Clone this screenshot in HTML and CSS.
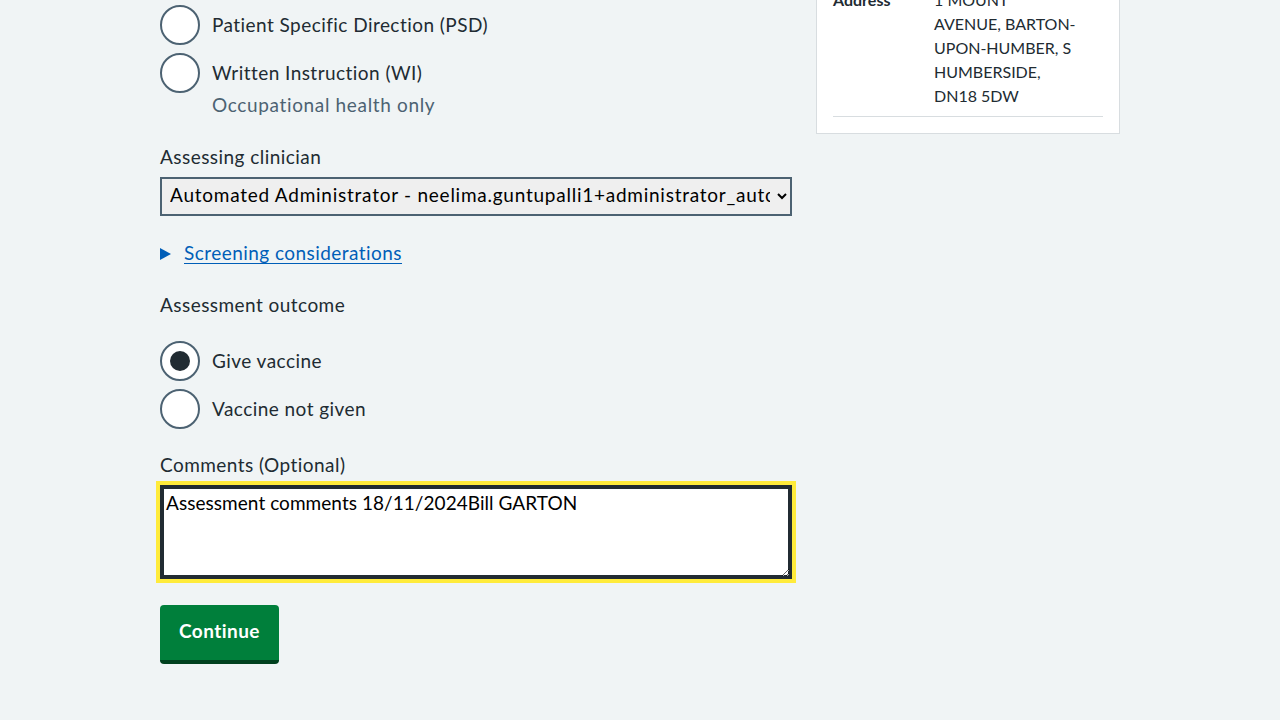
FILE: index.html
```html
<!DOCTYPE html>
<html lang="en">
<head>
    <meta charset="UTF-8">
    <meta name="viewport" content="width=device-width, initial-scale=1.0">
    <title>Assessment</title>
    <link rel="stylesheet" href="styles.css">
</head>
<body>

<div class="page">
    <div class="main-col">
        <div class="radio-group">
            <div class="radio-item">
                <span class="radio"></span>
                <div class="radio-text">Patient Specific Direction (PSD)</div>
            </div>
            <div class="radio-item">
                <span class="radio"></span>
                <div class="radio-text">
                    Written Instruction (WI)
                    <div class="hint">Occupational health only</div>
                </div>
            </div>
        </div>

        <div class="form-group">
            <label class="label" for="clinician">Assessing clinician</label>
            <select id="clinician" class="select">
                <option>Automated Administrator - neelima.guntupalli1+administrator_automated@nhs.net</option>
            </select>
        </div>

        <div class="details">
            <span class="details-arrow"></span>
            <a href="#" class="details-link">Screening considerations</a>
        </div>

        <div class="form-group">
            <div class="legend">Assessment outcome</div>
            <div class="radio-item">
                <span class="radio checked"></span>
                <div class="radio-text">Give vaccine</div>
            </div>
            <div class="radio-item">
                <span class="radio"></span>
                <div class="radio-text">Vaccine not given</div>
            </div>
        </div>

        <div class="form-group">
            <label class="label" for="comments">Comments (Optional)</label>
            <textarea id="comments" class="textarea">Assessment comments 18/11/2024Bill GARTON</textarea>
        </div>

        <button class="button">Continue</button>
    </div>

    <div class="side-col">
        <div class="card">
            <div class="summary-row">
                <div class="summary-key">Address</div>
                <div class="summary-value">1 MOUNT<br>AVENUE, BARTON-<br>UPON-HUMBER, S<br>HUMBERSIDE,<br>DN18 5DW</div>
            </div>
        </div>
    </div>
</div>

</body>
</html>
```

FILE: styles.css
```css
body {
    font-family: 'Lato', 'Liberation Sans', sans-serif;
    background-color: #f0f4f5;
    color: #212b32;
    margin: 0;
    padding: 0;
}

.page {
    width: 960px;
    margin: 0 auto;
    display: grid;
    grid-template-columns: 632px 304px;
    gap: 24px;
    align-items: start;
}

.main-col {
    padding-top: 5px;
    font-size: 19px;
    line-height: 28px;
    letter-spacing: 0.45px;
}

.radio-item {
    display: flex;
    align-items: flex-start;
    margin-bottom: 8px;
}

.radio-item:last-child {
    margin-bottom: 0;
}

.radio {
    flex: none;
    width: 40px;
    height: 40px;
    box-sizing: border-box;
    border: 2px solid #4c6272;
    border-radius: 50%;
    background-color: #fff;
    position: relative;
}

.radio.checked::after {
    content: '';
    position: absolute;
    top: 8px;
    left: 8px;
    width: 20px;
    height: 20px;
    border-radius: 50%;
    background-color: #212b32;
}

.radio-text {
    margin-left: 12px;
    padding-top: 6px;
}

.hint {
    color: #4c6272;
    margin-top: 4px;
    letter-spacing: 0.65px;
}

.radio-group {
    margin-bottom: 24px;
}

.form-group {
    margin-bottom: 22px;
}

.label,
.legend {
    display: block;
    margin-bottom: 6px;
}

.legend {
    margin-bottom: 22px;
}

.select {
    display: block;
    width: 632px;
    height: 39px;
    box-sizing: border-box;
    border: 2px solid #4c6272;
    border-radius: 0;
    background-color: #efefef;
    color: #000;
    font-family: inherit;
    font-size: 19px;
    letter-spacing: 0.75px;
    padding: 0 4px 4px;
}

.details {
    display: flex;
    align-items: center;
    margin-top: 23px;
    margin-bottom: 24px;
}

.details-arrow {
    width: 0;
    height: 0;
    border-top: 6px solid transparent;
    border-bottom: 6px solid transparent;
    border-left: 11px solid #005eb8;
    margin-right: 13px;
    margin-top: 2px;
}

.details-link {
    color: #005eb8;
    text-decoration: underline;
    text-underline-offset: 3px;
}

.textarea {
    display: block;
    width: 632px;
    height: 94px;
    box-sizing: border-box;
    margin-top: 1px;
    border: 2px solid #212b32;
    box-shadow: inset 0 0 0 2px #212b32;
    outline: 4px solid #ffeb3b;
    padding: 4px 4px 4px;
    font-family: inherit;
    font-size: 19px;
    letter-spacing: 0.05px;
    line-height: 24px;
    color: #000;
    resize: vertical;
    margin-bottom: 26px;
}

.button {
    font-family: inherit;
    font-size: 19px;
    font-weight: bold;
    letter-spacing: 0.45px;
    line-height: 28px;
    color: #fff;
    background-color: #007f3b;
    border: none;
    border-bottom: 4px solid #00401e;
    border-radius: 4px;
    padding: 12px 19px 15px;
    cursor: pointer;
}

.card {
    background-color: #fff;
    border: 1px solid #d8dde0;
    padding: 16px;
    margin-top: -37px;
    font-size: 16px;
    line-height: 24px;
}

.summary-row {
    display: flex;
    padding: 8px 0;
    border-bottom: 1px solid #d8dde0;
}

.summary-key {
    width: 101px;
    font-weight: bold;
}

.summary-value {
    flex: 1;
}
```
